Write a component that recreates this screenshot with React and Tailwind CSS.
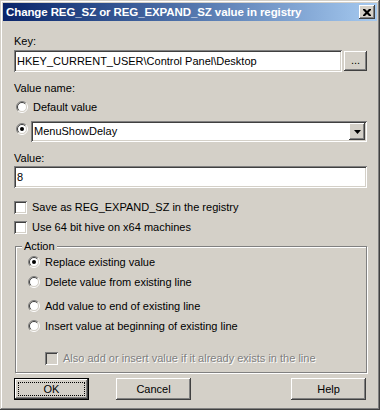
import React from 'react'

const raised = 'shadow-[inset_-1px_-1px_#404040,inset_1px_1px_#ffffff,inset_-2px_-2px_#808080,inset_2px_2px_#d4d0c8]'
const sunken = 'shadow-[inset_1px_1px_#808080,inset_-1px_-1px_#ffffff,inset_2px_2px_#404040,inset_-2px_-2px_#d4d0c8]'

function Radio({ checked }) {
  return (
    <svg width="12" height="12" viewBox="0 0 12 12" className="shrink-0">
      <circle cx="6" cy="6" r="4.5" fill="#ffffff" />
      <path d="M2.1 9.9 A5.5 5.5 0 0 1 9.9 2.1" fill="none" stroke="#808080" />
      <path d="M9.9 2.1 A5.5 5.5 0 0 1 2.1 9.9" fill="none" stroke="#ffffff" />
      <path d="M2.8 9.2 A4.5 4.5 0 0 1 9.2 2.8" fill="none" stroke="#404040" />
      <path d="M9.2 2.8 A4.5 4.5 0 0 1 2.8 9.2" fill="none" stroke="#d4d0c8" />
      {checked && <circle cx="6" cy="6" r="2" fill="#000000" />}
    </svg>
  )
}

function Check({ disabled }) {
  return (
    <div className={`w-[13px] h-[13px] shrink-0 ${sunken} ${disabled ? 'bg-[#d4d0c8]' : 'bg-white'}`} />
  )
}

function Button({ children, isDefault, className = '' }) {
  if (isDefault) {
    return (
      <div className={`h-[22px] w-[75px] border border-black ${className}`}>
        <div className={`h-full w-full flex items-center justify-center p-[3px] ${raised}`}>
          <div className="h-full w-full flex items-center justify-center border border-dotted border-black">
            {children}
          </div>
        </div>
      </div>
    )
  }
  return (
    <div className={`h-[22px] w-[75px] flex items-center justify-center ${raised} ${className}`}>
      {children}
    </div>
  )
}

export default function App() {
  return (
    <div
      className="w-[380px] h-[410px] bg-[#d4d0c8] p-[3px] text-[11px] leading-[13px] text-black shadow-[inset_-1px_-1px_#404040,inset_1px_1px_#d4d0c8,inset_-2px_-2px_#808080,inset_2px_2px_#ffffff]"
      style={{ fontFamily: '"Liberation Sans", Arial, sans-serif' }}
    >
      {/* title bar */}
      <div className="h-[18px] flex items-center justify-between pl-[3px] pr-[2px] bg-gradient-to-r from-[#0a246a] to-[#a6caf0]">
        <span className="text-white font-bold text-[11.5px] tracking-[-0.1px] whitespace-nowrap">
          Change REG_SZ or REG_EXPAND_SZ value in registry
        </span>
        <div className={`w-[16px] h-[14px] bg-[#d4d0c8] flex items-center justify-center ${raised}`}>
          <svg width="8" height="7" viewBox="0 0 8 7">
            <path d="M0 0h2l2 2 2-2h2v1l-2.5 2.5L8 6v1H6L4 5 2 7H0V6l2.5-2.5L0 1z" fill="#000" />
          </svg>
        </div>
      </div>

      <div className="flex flex-col pl-[11px] pr-[10px]">
        <div className="mt-[14px]">Key:</div>
        <div className="mt-[2px] flex items-start gap-[2px]">
          <div className={`w-[328px] h-[22px] bg-white flex items-center px-[3px] whitespace-nowrap ${sunken}`}>
            HKEY_CURRENT_USER\Control Panel\Desktop
          </div>
          <div className={`mt-[1px] w-[23px] h-[20px] flex items-end justify-center pb-[4px] ${raised}`}>...</div>
        </div>

        <div className="mt-[10px]">Value name:</div>
        <div className="mt-[4px] h-[16px] flex items-center gap-[5px] pl-[2px]">
          <Radio />
          <span>Default value</span>
        </div>
        <div className="mt-[6px] flex items-start gap-[3px] pl-[2px]">
          <div className="mt-[2px]">
            <Radio checked />
          </div>
          <div className={`flex-1 h-[21px] bg-white flex items-center justify-between pl-[3px] pr-[2px] ${sunken}`}>
            <span>MenuShowDelay</span>
            <div className={`w-[16px] h-[17px] bg-[#d4d0c8] flex items-center justify-center ${raised}`}>
              <svg width="7" height="4" viewBox="0 0 7 4">
                <path d="M0 0h7L3.5 4z" fill="#000" />
              </svg>
            </div>
          </div>
        </div>

        <div className="mt-[10px]">Value:</div>
        <div className={`mt-[1px] h-[22px] bg-white flex items-center px-[3px] ${sunken}`}>8</div>

        <div className="mt-[13px] h-[13px] flex items-center gap-[5px]">
          <Check />
          <span>Save as REG_EXPAND_SZ in the registry</span>
        </div>
        <div className="mt-[7px] h-[13px] flex items-center gap-[5px]">
          <Check />
          <span>Use 64 bit hive on x64 machines</span>
        </div>

        {/* Action group */}
        <div className="relative mt-[12px] ml-[1px] h-[127px] border border-[#808080] shadow-[1px_1px_#ffffff,inset_1px_1px_#ffffff] flex flex-col pl-[12px]">
          <span className="absolute -top-[7px] left-[6px] px-[2px] bg-[#d4d0c8]">Action</span>
          <div className="mt-[7px] h-[16px] flex items-center gap-[5px]">
            <Radio checked />
            <span>Replace existing value</span>
          </div>
          <div className="mt-[4px] h-[16px] flex items-center gap-[5px]">
            <Radio />
            <span>Delete value from existing line</span>
          </div>
          <div className="mt-[8px] h-[16px] flex items-center gap-[5px]">
            <Radio />
            <span>Add value to end of existing line</span>
          </div>
          <div className="mt-[4px] h-[16px] flex items-center gap-[5px]">
            <Radio />
            <span>Insert value at beginning of existing line</span>
          </div>
          <div className="mt-[18px] ml-[17px] h-[13px] flex items-center gap-[5px]">
            <Check disabled />
            <span className="text-[#808080] [text-shadow:1px_1px_#ffffff]">
              Also add or insert value if it already exists in the line
            </span>
          </div>
        </div>

        <div className="mt-[5px] flex items-center">
          <Button isDefault>OK</Button>
          <Button className="ml-[27px]">Cancel</Button>
          <Button className="ml-auto mr-[1px]">Help</Button>
        </div>
      </div>
    </div>
  )
}
